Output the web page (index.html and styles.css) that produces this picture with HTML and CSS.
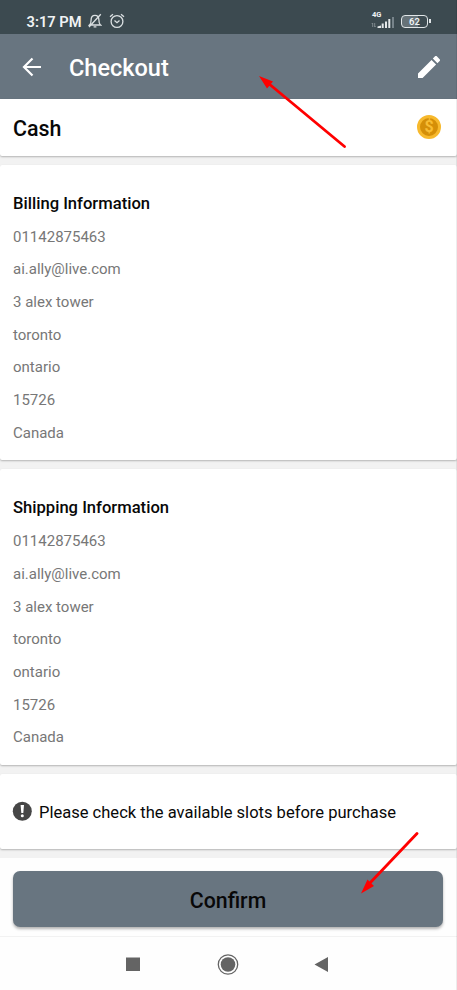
FILE: index.html
```html
<!DOCTYPE html>
<html lang="en">
<head>
<meta charset="utf-8">
<title>Checkout</title>
<link rel="stylesheet" href="styles.css">
</head>
<body>
<div class="phone">
  <header class="status">
    <span class="time">3:17 PM</span>
    <svg class="bell" width="14" height="16" viewBox="0 0 14 16" fill="none" stroke="#dbe0e2" stroke-width="1.300"><path d="M1.500 12H12.500C11 10.800 10.900 9.500 10.900 7C10.900 4 9.500 2.300 7 2.300S3.100 4 3.100 7C3.100 9.500 3 10.800 1.500 12ZM5.600 13.800H8.400M12.800 1.200L1 14"/></svg>
    <svg class="alarm" width="16" height="16" viewBox="0 0 16 16" fill="none" stroke="#dbe0e2" stroke-width="1.300"><circle cx="8" cy="8.500" r="5.900"/><path d="M5.500 7.500L8 9.700L10.500 7.500M1 3.700L4 1.200M15 3.700L12 1.200"/></svg>
    <div class="signal">
      <span class="net">4G</span>
      <svg width="24" height="12" viewBox="0 0 24 12"><path d="M1.700 6v4M0.700 7L1.700 6M3.700 10V6M4.700 9L3.700 10" stroke="#8d979c" stroke-width=".8" fill="none"/><path fill="#e4e8ea" d="M6.500 11V9.500L10 8.500V11ZM10.700 6.500h2V11h-2ZM14 4.500h2V11h-2ZM17.300 2h2v9h-2Z"/><path fill="#77838a" d="M21 0h2v11h-2Z"/></svg>
    </div>
    <div class="battery"><span>62</span></div>
  </header>
  <nav class="appbar">
    <svg class="back" width="20" height="20" viewBox="0 0 20 20" fill="none" stroke="#fff" stroke-width="2.200"><path d="M19 10H2.200M10.500 1.500L2 10L10.500 18.500"/></svg>
    <h1>Checkout</h1>
    <svg class="edit" width="22" height="22" viewBox="3 3 18 18" fill="#fff"><path d="M3 17.250V21h3.750L17.810 9.940l-3.750-3.750L3 17.250zM20.710 7.040c.39-.39.39-1.020 0-1.410l-2.340-2.340c-.39-.39-1.020-.39-1.410 0l-1.830 1.830 3.750 3.750 1.830-1.830z"/></svg>
  </nav>
  <main>
    <section class="card cash">
      <h2>Cash</h2>
      <div class="coin"><span>$</span></div>
    </section>
    <section class="card info">
      <h3>Billing Information</h3>
      <p>01142875463</p><p>ai.ally@live.com</p><p>3 alex tower</p><p>toronto</p><p>ontario</p><p>15726</p><p>Canada</p>
    </section>
    <section class="card info">
      <h3>Shipping Information</h3>
      <p>01142875463</p><p>ai.ally@live.com</p><p>3 alex tower</p><p>toronto</p><p>ontario</p><p>15726</p><p>Canada</p>
    </section>
    <section class="card notice">
      <svg width="20" height="20" viewBox="0 0 20 20"><circle cx="10.300" cy="10.300" r="9.500" fill="#464646"/><path d="M8.600 4h3.400l-.7 8h-2Z" fill="#fff"/><circle cx="10.300" cy="14.800" r="1.500" fill="#fff"/></svg>
      <span>Please check the available slots before purchase</span>
    </section>
  </main>
  <footer class="action"><button>Confirm</button></footer>
  <div class="system">
    <svg width="457" height="53" viewBox="0 0 457 53" fill="#646464"><path d="M126 20.500h14v13.500h-14ZM314.500 27.500L328 20v15Z"/><circle cx="228" cy="27.500" r="9.700" fill="none" stroke="#646464" stroke-width="1.300"/><circle cx="228" cy="27.500" r="7.300"/></svg>
  </div>
  <svg class="arrows" width="457" height="990" viewBox="0 0 457 990" fill="#f00"><path d="M344.500 146.500L268 83M417 833.500L369 884" fill="none" stroke="#f00" stroke-width="2.800" stroke-linecap="round"/><path d="M259 76L273 81.500L267 88.500ZM361 893.500L367.500 879.500L374 886Z"/></svg>
</div>
</body>
</html>
```
FILE: styles.css
```css
* { box-sizing: border-box; }
body { margin: 0; font-family: Roboto, "Liberation Sans", sans-serif; color: #080808; }
h1, h2, h3, p { margin: 0; font-weight: 500; white-space: nowrap; }
svg { display: block; flex: none; }
.phone { position: relative; width: 457px; height: 990px; background: #f2f2f2; overflow: hidden; }
.phone::after { content: ""; position: absolute; top: 0; right: 0; width: 1px; height: 100%; background: rgba(0,0,0,.07); }
.status { height: 34px; background: #3c4a50; display: flex; align-items: center; padding: 8px 25px 0 26.5px; color: #f0f3f4; }
.time { font-size: 14.7px; font-weight: 600; line-height: 18px; width: 55px; white-space: nowrap; padding-top: 1px; }
.bell { margin-left: 6.5px; }
.alarm { margin-left: 6.5px; }
.signal { margin-left: auto; width: 24px; height: 17px; margin-bottom: 1px; }
.net { display: block; font-size: 7.5px; line-height: 6px; font-weight: 700; padding-left: 1px; }
.signal svg { margin-top: -1px; }
.battery { position: relative; width: 27px; height: 13px; margin-left: 6px; border: 1.5px solid #e1e6e8; border-radius: 4px; background: linear-gradient(90deg, #667278 62%, #3c4a50 62%); font-size: 9.5px; line-height: 11px; font-weight: 600; text-align: center; margin-right: 4px; }
.battery::after { content: ""; position: absolute; right: -4px; top: 3px; width: 2px; height: 4px; background: #e1e6e8; }
.appbar { height: 65px; background: #687580; color: #fff; display: flex; align-items: center; padding: 2px 17px 0 22px; }
.appbar h1 { font-size: 23.5px; line-height: 30px; margin-left: 27px; }
.back { margin-top: -2px; }
.edit { margin-left: auto; margin-top: -2px; }
main { display: flex; flex-direction: column; gap: 9px; }
.card { background: #fff; box-shadow: 0 1px 2px rgba(0,0,0,.26); border-radius: 2px; }
.cash { height: 56.5px; display: flex; align-items: center; justify-content: space-between; padding: 1px 16px 0 13px; border-radius: 0 0 2px 2px; }
.cash h2 { font-size: 21.4px; line-height: 28px; padding-top: 2px; }
.coin { width: 24px; height: 24px; border-radius: 50%; border: 3px solid #f7b92d; background: #d58f08; color: #f8bd34; font-size: 16px; font-weight: 700; line-height: 18px; text-align: center; margin-top: -1px; }
.info { height: 295.5px; padding: 26px 13px 0; }
.info h3 { font-size: 16.6px; line-height: 26px; margin-bottom: 4.2px; }
.info p { font-size: 15px; line-height: 32.67px; font-weight: 400; color: #777; }
.notice { height: 75px; padding: 0 12px; display: flex; align-items: center; gap: 7px; font-size: 16.55px; white-space: nowrap; }
.notice svg { margin-top: -1px; }
.notice span { padding-top: 2px; }
.action { height: 79.5px; margin-top: 9px; padding: 13.5px 14px 0 13px; background: #fefefe; border-bottom: 1px solid #f2f2f2; }
.action button { display: block; width: 100%; height: 56px; border: 0; border-radius: 7px; background: #687580; color: #080808; font: 500 21.3px/58px Roboto, "Liberation Sans", sans-serif; padding: 1px 0 0; box-shadow: 0 2px 3px rgba(0,0,0,.3); }
.system { height: 53px; background: #fefefe; }
.arrows { position: absolute; left: 0; top: 0; pointer-events: none; }
```
